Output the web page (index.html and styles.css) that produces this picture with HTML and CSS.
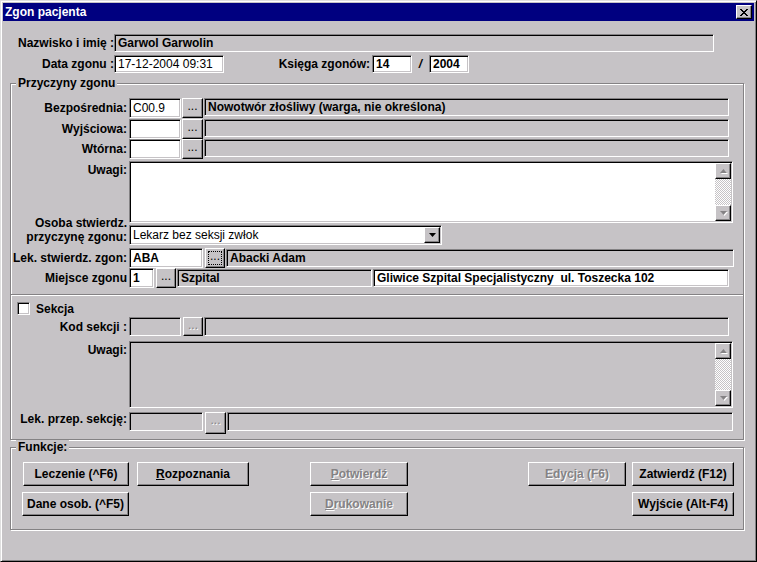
FILE: index.html
```html
<!DOCTYPE html>
<html lang="pl">
<head>
<meta charset="utf-8">
<title>Zgon pacjenta</title>
<link rel="stylesheet" href="styles.css">
</head>
<body>
<div class="win">
  <div class="titlebar">
    <span class="title">Zgon pacjenta</span>
    <span class="close">
      <svg width="8" height="7" viewBox="0 0 8 7" shape-rendering="crispEdges"><path d="M0 0h2v1H0zM6 0h2v1H6zM1 1h2v1H1zM5 1h2v1H5zM2 2h4v1H2zM3 3h2v1H3zM2 4h4v1H2zM1 5h2v1H1zM5 5h2v1H5zM0 6h2v1H0zM6 6h2v1H6z" fill="#000"/></svg>
    </span>
  </div>
  <div class="client">
    <div class="row r-name">
      <span class="lbl lbl-top">Nazwisko i imię :</span>
      <span class="fld ro w-name">Garwol Garwolin</span>
    </div>
    <div class="row r-date">
      <span class="lbl lbl-top">Data zgonu :</span>
      <span class="fld wh w-date">17-12-2004 09:31</span>
      <span class="lbl lbl-ksiega">Księga zgonów:</span>
      <span class="fld wh w-nr">14</span>
      <span class="slash">/</span>
      <span class="fld wh w-nr">2004</span>
    </div>

    <fieldset class="group g-main">
      <legend>Przyczyny zgonu</legend>
      <div class="frow f-r1">
        <span class="flbl">Bezpośrednia:</span>
        <span class="fld wh code">C00.9</span>
        <span class="btn dots">...</span>
        <span class="fld ro desc">Nowotwór złośliwy (warga, nie określona)</span>
      </div>
      <div class="frow f-r2">
        <span class="flbl">Wyjściowa:</span>
        <span class="fld wh code"></span>
        <span class="btn dots">...</span>
        <span class="fld ro desc"></span>
      </div>
      <div class="frow f-r3">
        <span class="flbl">Wtórna:</span>
        <span class="fld wh code"></span>
        <span class="btn dots">...</span>
        <span class="fld ro desc"></span>
      </div>
      <div class="frow f-memo">
        <span class="flbl flbl-top">Uwagi:</span>
        <div class="memo wh m1">
          <div class="vscroll">
            <span class="sbtn"><svg width="7" height="4" viewBox="0 0 7 4"><path d="M3.5 0L7 4H0z" class="arr"/></svg></span>
            <span class="strack"></span>
            <span class="sbtn"><svg width="7" height="4" viewBox="0 0 7 4"><path d="M0 0h7L3.5 4z" class="arr"/></svg></span>
          </div>
        </div>
      </div>
      <div class="frow f-osoba">
        <span class="flbl flbl-two"><span>Osoba stwierdz.</span><span>przyczynę zgonu:</span></span>
        <div class="combo wh">
          <span class="combo-txt">Lekarz bez seksji zwłok</span>
          <span class="cbtn"><svg width="7" height="4" viewBox="0 0 7 4"><path d="M0 0h7L3.5 4z" fill="#000"/></svg></span>
        </div>
      </div>
      <div class="frow f-lek">
        <span class="flbl">Lek. stwierdz. zgon:</span>
        <span class="fld wh code-lek">ABA</span>
        <span class="btn dots dots-lek focus">...</span>
        <span class="fld ro desc-lek">Abacki Adam</span>
      </div>
      <div class="frow f-miejsce">
        <span class="flbl">Miejsce zgonu</span>
        <span class="fld wh code-m">1</span>
        <span class="btn dots dots-m">...</span>
        <span class="fld ro desc-m">Szpital</span>
        <span class="fld wh addr">Gliwice Szpital Specjalistyczny&nbsp; ul. Toszecka 102</span>
      </div>

      <div class="divider"></div>

      <div class="frow f-sekcja">
        <span class="chk"></span>
        <span class="chk-lbl">Sekcja</span>
      </div>
      <div class="frow f-kod">
        <span class="flbl">Kod sekcji :</span>
        <span class="fld ro code">&nbsp;</span>
        <span class="btn dots dis dots-kod">...</span>
        <span class="fld ro desc-kod"></span>
      </div>
      <div class="frow f-memo2">
        <span class="flbl flbl-top">Uwagi:</span>
        <div class="memo ro m2">
          <div class="vscroll">
            <span class="sbtn"><svg width="7" height="4" viewBox="0 0 7 4"><path d="M3.5 0L7 4H0z" class="arr"/></svg></span>
            <span class="strack"></span>
            <span class="sbtn"><svg width="7" height="4" viewBox="0 0 7 4"><path d="M0 0h7L3.5 4z" class="arr"/></svg></span>
          </div>
        </div>
      </div>
      <div class="frow f-lekp">
        <span class="flbl">Lek. przep. sekcję:</span>
        <span class="fld ro code-lek"></span>
        <span class="btn dots dis dots-lekp">...</span>
        <span class="fld ro desc-lekp"></span>
      </div>
    </fieldset>

    <fieldset class="group g-fun">
      <legend>Funkcje:</legend>
      <div class="brow brow1">
        <span class="pbtn b-lecz">Leczenie (^F6)</span>
        <span class="pbtn b-rozp"><u>R</u>ozpoznania</span>
        <span class="pbtn dis b-potw"><u>P</u>otwierdź</span>
        <span class="pbtn dis b-edy">Edycja (F6)</span>
        <span class="pbtn b-zatw">Zatwierdź (F12)</span>
      </div>
      <div class="brow brow2">
        <span class="pbtn b-dane">Dane osob. (^F5)</span>
        <span class="pbtn dis b-druk"><u>D</u>rukowanie</span>
        <span class="pbtn b-wyj">Wyjście (Alt-F4)</span>
      </div>
    </fieldset>
  </div>
</div>
</body>
</html>
```

FILE: styles.css
```css
* { box-sizing: border-box; }
html, body { margin: 0; padding: 0; }
body {
  width: 757px;
  height: 562px;
  overflow: hidden;
  background: #c6c3c6;
  color: #000;
  font-family: "Liberation Sans", Arial, sans-serif;
  font-weight: bold;
  font-size: 12px;
  line-height: 14px;
}

.win {
  width: 757px;
  height: 562px;
  background: #c6c3c6;
  border: 1px solid;
  border-color: #dfdfdf #000 #000 #dfdfdf;
  box-shadow: inset 1px 1px 0 #fff, inset -1px -1px 0 #848284;
  padding: 2px;
  display: flex;
  flex-direction: column;
}

.titlebar {
  flex: none;
  height: 18px;
  background: #000080;
  color: #fff;
  display: flex;
  align-items: center;
  justify-content: space-between;
  padding: 0 2px;
}
.title { line-height: 18px; }
.close {
  width: 16px;
  height: 14px;
  background: #c6c3c6;
  border: 1px solid;
  border-color: #fff #000 #000 #fff;
  box-shadow: inset -1px -1px 0 #848284;
  display: flex;
  align-items: center;
  justify-content: center;
}
.close svg { display: block; }

.client { flex: 1; display: flex; flex-direction: column; }

.row { display: flex; align-items: center; flex: none; }
.r-name { margin-top: 13px; height: 18px; }
.r-date { margin-top: 3px; height: 18px; }

.lbl { white-space: nowrap; }
.lbl-top { width: 111px; text-align: right; margin-right: 0; }
.lbl-ksiega { width: 146px; text-align: right; margin-right: 2px; }

/* sunken edit field */
.fld {
  flex: none;
  display: block;
  height: 18px;
  border: 1px solid;
  border-color: #848284 #fff #fff #848284;
  box-shadow: inset 1px 1px 0 #000, inset -1px -1px 0 #c6c3c6;
  padding: 0 2px 0 3px;
  line-height: 16px;
  white-space: nowrap;
  overflow: hidden;
}
.wh { background: #fff; }
.ro { background: #c6c3c6; }

.w-name { width: 600px; }
.w-date { width: 110px; font-weight: normal; }
.w-nr { width: 40px; }
.slash { width: 17px; text-align: center; font-style: italic; }

/* group boxes */
.group {
  flex: none;
  margin: 3px 0 0 7px;
  width: 734px;
  min-width: 0;
  padding: 0;
  border: 1px solid #848284;
  box-shadow: inset 1px 1px 0 #fff, 1px 1px 0 #fff;
}
.group legend {
  margin-left: 5px;
  padding: 0 2px;
  line-height: 14px;
  background: #c6c3c6;
}
.g-main { padding-bottom: 5px; }

.frow { display: flex; align-items: center; flex: none; height: 20px; }
.flbl {
  flex: none;
  width: 116px;
  margin-right: 2px;
  text-align: right;
  white-space: nowrap;
}
.flbl-top { align-self: flex-start; margin-top: 2px; }
.flbl-two {
  height: 20px;
  display: flex;
  flex-direction: column;
  justify-content: flex-end;
  line-height: 14px;
  padding-bottom: 1px;
}

.f-r1 { margin-top: 8px; }
.f-r2 { margin-top: 1px; }
.f-r3 { margin-top: 0; }
.f-memo { margin-top: 2px; height: 62px; }
.f-osoba { margin-top: 2px; }
.f-lek { margin-top: 3px; }
.f-miejsce { margin-top: 0; }
.f-sekcja { margin-top: 6px; height: 13px; }
.f-kod { margin-top: 2px; height: 19px; }
.f-memo2 { margin-top: 5px; height: 67px; }
.f-lekp { margin-top: 4px; height: 22px; align-items: flex-start; }

.code { width: 52px; height: 20px; line-height: 18px; font-weight: normal; }
.desc { width: 525px; margin-left: 1px; }
.f-r1 .desc, .f-r2 .desc, .f-r3 .desc { align-self: flex-start; }

/* raised buttons */
.btn, .pbtn, .sbtn, .cbtn {
  background: #c6c3c6;
  border: 1px solid;
  border-color: #fff #000 #000 #fff;
  box-shadow: inset -1px -1px 0 #848284;
}
.dots {
  flex: none;
  width: 21px;
  height: 20px;
  margin-left: 1px;
  text-align: center;
  line-height: 14px;
  font-weight: normal;
  letter-spacing: 0;
}
.dis { color: #848284; text-shadow: 1px 1px 0 #fff; }

.memo {
  flex: none;
  width: 604px;
  height: 100%;
  border: 1px solid;
  border-color: #848284 #fff #fff #848284;
  box-shadow: inset 1px 1px 0 #000, inset -1px -1px 0 #c6c3c6;
  padding: 1px;
  display: flex;
  justify-content: flex-end;
}
.vscroll {
  width: 16px;
  height: 100%;
  display: flex;
  flex-direction: column;
}
.sbtn {
  flex: none;
  width: 16px;
  height: 16px;
  display: flex;
  align-items: center;
  justify-content: center;
}
.sbtn svg { display: block; filter: drop-shadow(1px 1px 0 #fff); }
.arr { fill: #848284; }
.strack {
  flex: 1;
  background: repeating-conic-gradient(#fff 0 25%, #c6c3c6 0 50%) 0 0 / 2px 2px;
}

.combo {
  flex: none;
  width: 313px;
  height: 20px;
  border: 1px solid;
  border-color: #848284 #fff #fff #848284;
  box-shadow: inset 1px 1px 0 #000, inset -1px -1px 0 #c6c3c6;
  padding: 1px;
  display: flex;
  justify-content: space-between;
}
.combo-txt { padding-left: 2px; line-height: 16px; font-weight: normal; }
.cbtn {
  width: 16px;
  height: 16px;
  display: flex;
  align-items: center;
  justify-content: center;
}
.cbtn svg { display: block; }

.code-lek { width: 74px; height: 20px; line-height: 18px; }
.dots-lek { margin-left: 2px; width: 20px; }
.focus { outline: 1px dotted #000; outline-offset: -4px; }
.desc-lek { width: 508px; margin-left: 1px; }

.code-m { width: 25px; height: 20px; line-height: 18px; }
.dots-m { margin-left: 2px; width: 20px; }
.desc-m { width: 195px; margin-left: 1px; }
.addr { width: 356px; margin-left: 1px; }

.divider {
  height: 2px;
  margin-top: 6px;
  border-top: 1px solid #848284;
  border-bottom: 1px solid #fff;
}

.chk {
  flex: none;
  width: 13px;
  height: 13px;
  margin-left: 6px;
  background: #fff;
  border: 1px solid;
  border-color: #848284 #fff #fff #848284;
  box-shadow: inset 1px 1px 0 #000, inset -1px -1px 0 #c6c3c6;
}
.chk-lbl { margin-left: 6px; }

.f-kod .code { height: 19px; }
.dots-kod { margin-left: 2px; width: 20px; height: 19px; }
.desc-kod { width: 525px; margin-left: 1px; height: 19px; }

.m2 .sbtn svg { filter: drop-shadow(1px 1px 0 #fff); }

.f-lekp .code-lek { height: 19px; }
.dots-lekp { margin-left: 2px; width: 21px; height: 22px; }
.desc-lekp { width: 506px; margin-left: 1px; height: 19px; }

/* Funkcje */
.g-fun { margin-top: 0; padding-bottom: 13px; }
.brow { display: flex; height: 24px; }
.brow1 { margin-top: 8px; }
.brow2 { margin-top: 6px; }
.pbtn {
  flex: none;
  height: 24px;
  display: flex;
  align-items: center;
  justify-content: center;
  white-space: nowrap;
}
.b-lecz { margin-left: 12px; width: 106px; }
.b-rozp { margin-left: 8px; width: 112px; }
.b-potw { margin-left: 61px; width: 98px; }
.b-edy { margin-left: 120px; width: 98px; }
.b-zatw { margin-left: 6px; width: 102px; }
.b-dane { margin-left: 11px; width: 107px; }
.b-druk { margin-left: 181px; width: 98px; }
.b-wyj { margin-left: 224px; width: 102px; }
```
